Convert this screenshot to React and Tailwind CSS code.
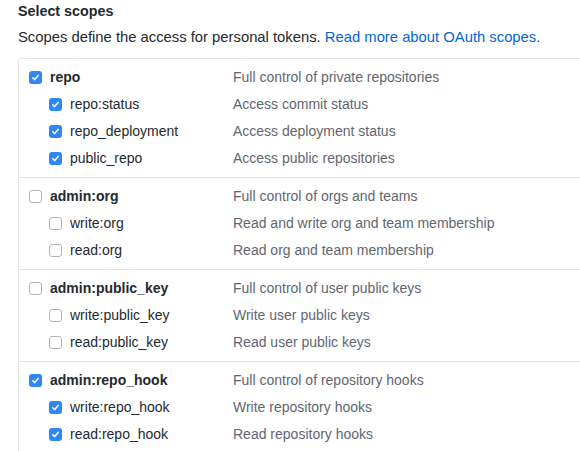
import React from "react";

const groups = [
  {
    checked: true,
    main: ["repo", "Full control of private repositories"],
    subs: [
      ["repo:status", "Access commit status"],
      ["repo_deployment", "Access deployment status"],
      ["public_repo", "Access public repositories"],
    ],
  },
  {
    checked: false,
    main: ["admin:org", "Full control of orgs and teams"],
    subs: [
      ["write:org", "Read and write org and team membership"],
      ["read:org", "Read org and team membership"],
    ],
  },
  {
    checked: false,
    main: ["admin:public_key", "Full control of user public keys"],
    subs: [
      ["write:public_key", "Write user public keys"],
      ["read:public_key", "Read user public keys"],
    ],
  },
  {
    checked: true,
    main: ["admin:repo_hook", "Full control of repository hooks"],
    subs: [
      ["write:repo_hook", "Write repository hooks"],
      ["read:repo_hook", "Read repository hooks"],
    ],
  },
];

function Box({ checked }) {
  if (checked) {
    return (
      <span className="flex h-[13px] w-[13px] shrink-0 items-center justify-center rounded-[3px] bg-[#2f86f6]">
        <svg width="9" height="9" viewBox="0 0 9 9">
          <path d="M1.8 4.8 L3.7 6.6 L7.2 2.4" fill="none" stroke="#fff" strokeWidth="1.5" strokeLinecap="round" strokeLinejoin="round" />
        </svg>
      </span>
    );
  }
  return <span className="block h-[13px] w-[13px] shrink-0 rounded-[3px] border border-[#b4b4b4] bg-white" />;
}

function Row({ checked, label, desc, sub }) {
  return (
    <div className="flex h-[27px] items-center">
      <div className={`flex w-[214px] shrink-0 items-center gap-[8px] ${sub ? "pl-[30px]" : "pl-[10px]"}`}>
        <Box checked={checked} />
        <span className={sub ? "text-[#24292e]" : "font-bold text-[#24292e]"}>{label}</span>
      </div>
      <span className="text-[#5f6670]">{desc}</span>
    </div>
  );
}

export default function App() {
  return (
    <div
      className="h-[451px] w-[580px] overflow-hidden bg-white pl-[18px] text-[14px]"
      style={{ fontFamily: '"Liberation Sans", Arial, sans-serif' }}
    >
      <h3 className="text-[14.3px] font-bold leading-[22px] text-[#24292e]">Select scopes</h3>
      <p className="mt-[5px] whitespace-nowrap text-[14.8px] leading-[21px] text-[#24292e]">
        Scopes define the access for personal tokens.{" "}
        <span className="text-[#0366d6]">Read more about OAuth scopes.</span>
      </p>
      <div className="mt-[10px] w-[620px] rounded-[3px] border border-[#e1e4e8]">
        {groups.map((g, i) => (
          <div key={i} className={`py-[5px] ${i > 0 ? "border-t border-[#e1e4e8]" : ""}`}>
            <Row checked={g.checked} label={g.main[0]} desc={g.main[1]} />
            {g.subs.map((s) => (
              <Row key={s[0]} checked={g.checked} label={s[0]} desc={s[1]} sub />
            ))}
          </div>
        ))}
      </div>
    </div>
  );
}
